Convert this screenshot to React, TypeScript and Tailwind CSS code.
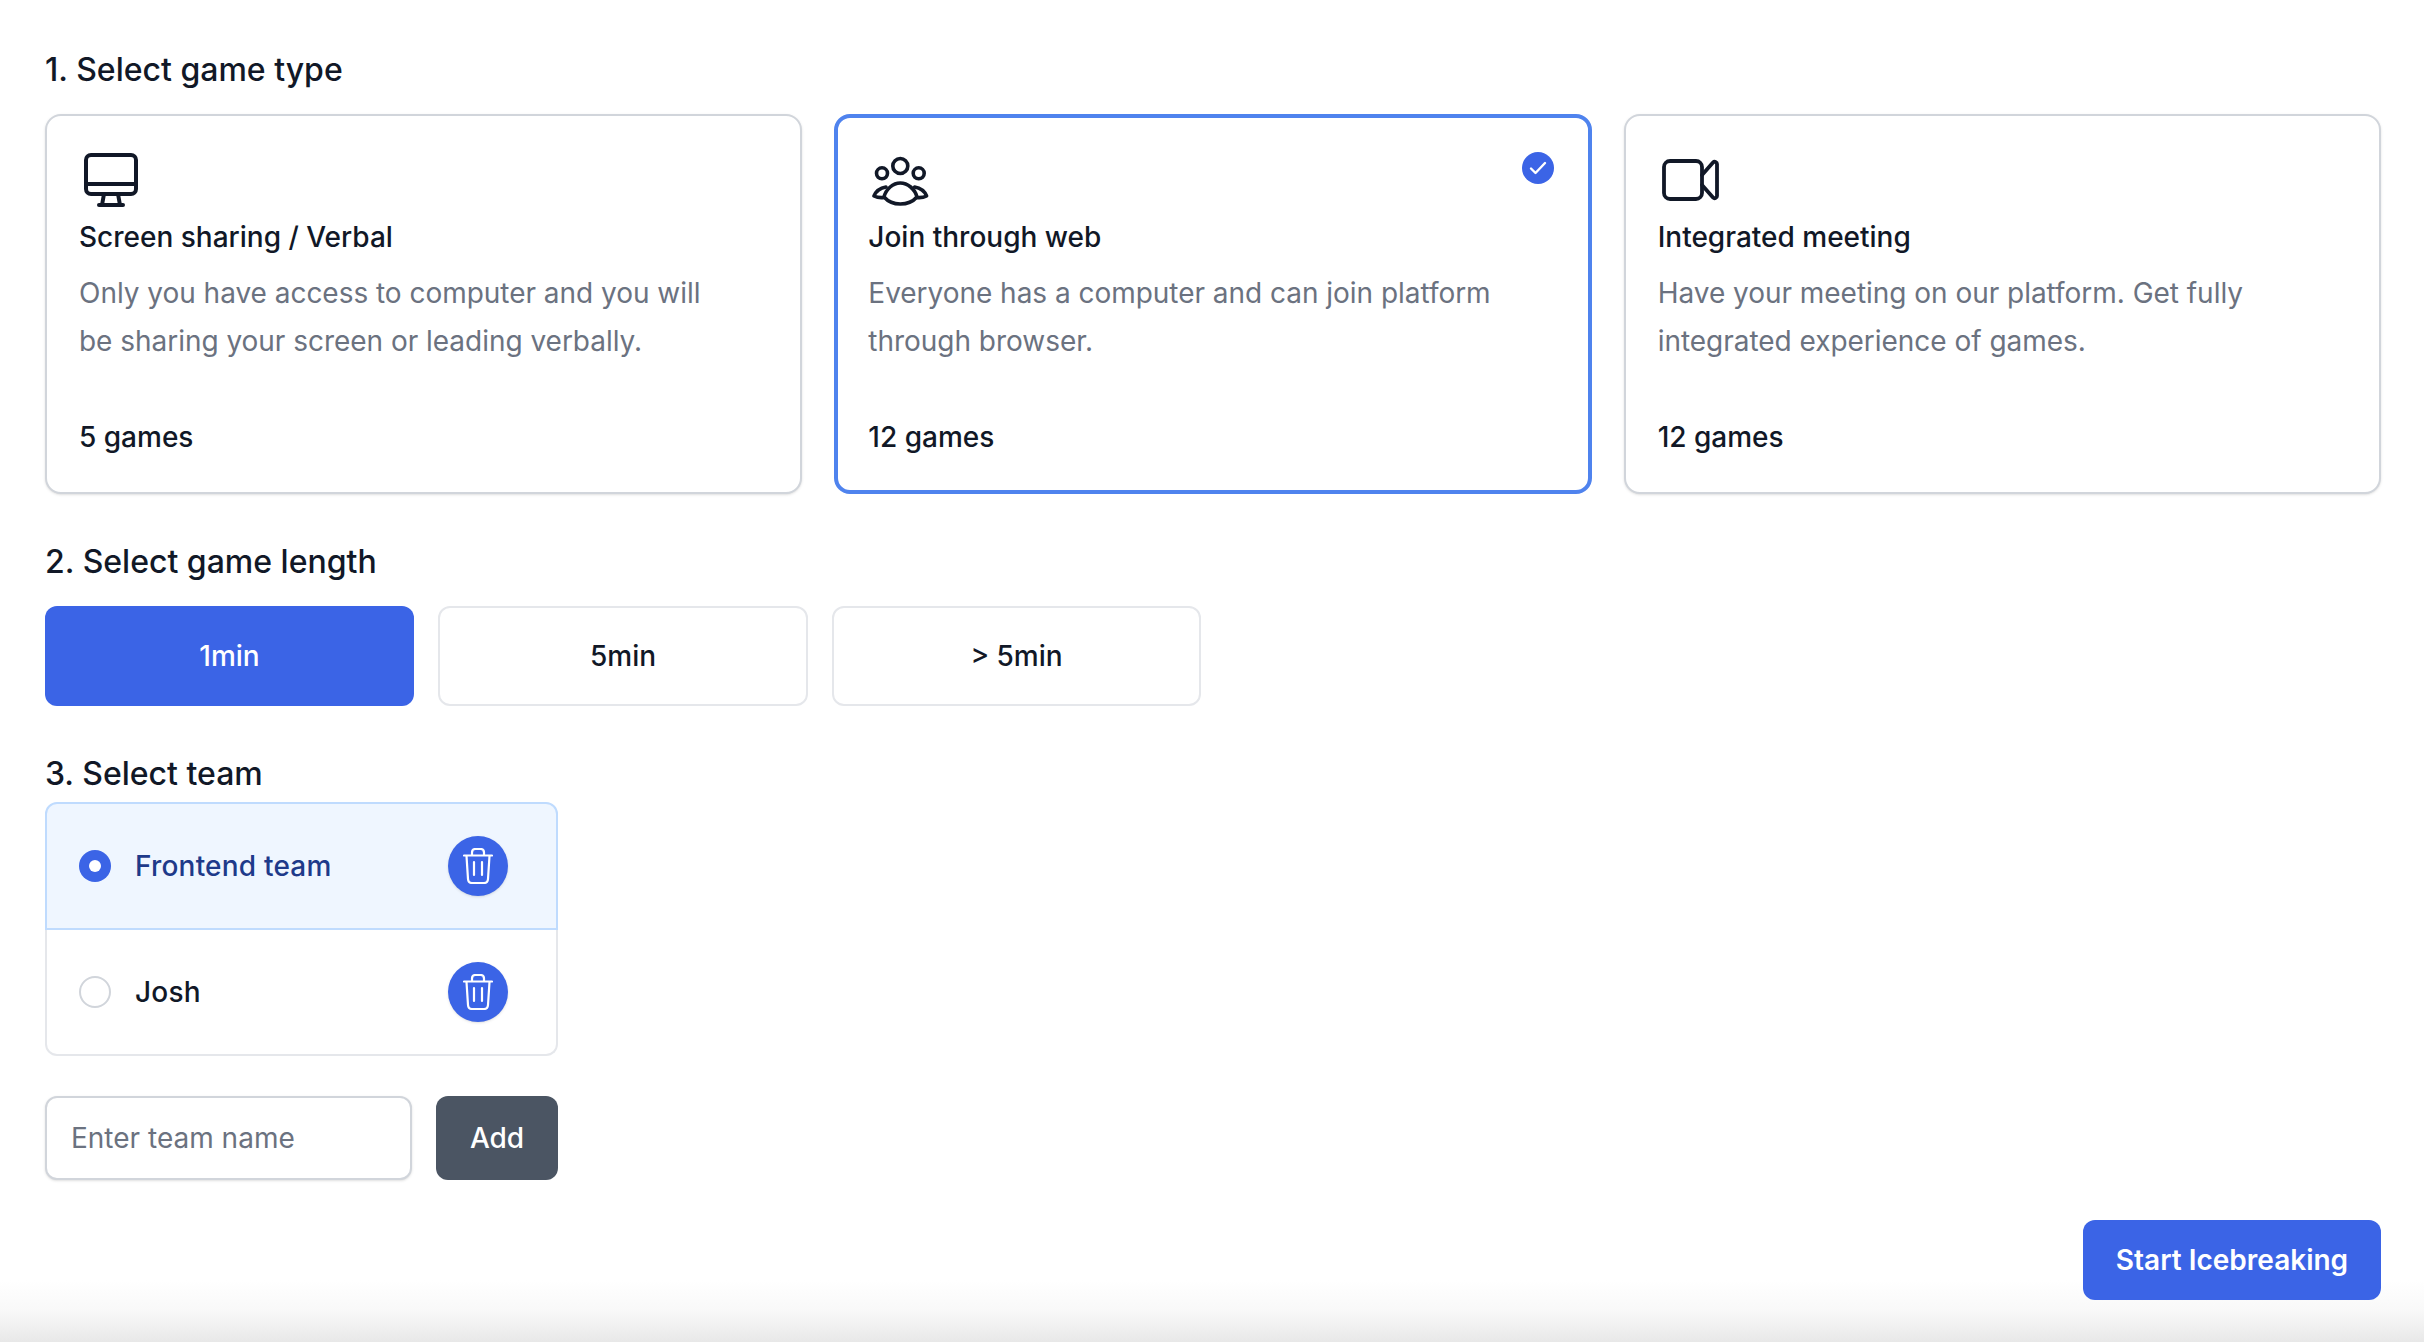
const cards = [
  {
    title: "Screen sharing / Verbal",
    lines: "Only you have access to computer and you will be sharing your screen or leading verbally.",
    games: "5 games",
    icon: <MonitorIcon />,
    selected: false,
  },
  {
    title: "Join through web",
    lines: "Everyone has a computer and can join platform through browser.",
    games: "12 games",
    icon: <GroupIcon />,
    selected: true,
  },
  {
    title: "Integrated meeting",
    lines: "Have your meeting on our platform. Get fully integrated experience of games.",
    games: "12 games",
    icon: <VideoIcon />,
    selected: false,
  },
];

function MonitorIcon() {
  return (
    <svg className="ml-[1px]" width="54" height="54" viewBox="0 0 54 54" fill="none" stroke="#111827" strokeWidth="4" strokeLinejoin="round" strokeLinecap="round">
      <rect x="2" y="2" width="50" height="39" rx="5" />
      <path d="M2 31h50" />
      <path d="M20 41l-2 11h18l-2-11" />
      <path d="M15 52h24" />
    </svg>
  );
}

function GroupIcon() {
  return (
    <svg className="mt-[3px]" width="58" height="52" viewBox="0 0 58 52" fill="none" stroke="#111827" strokeWidth="3.6" strokeLinejoin="round" strokeLinecap="round">
      <circle cx="28.300" cy="10" r="7.500" />
      <circle cx="10" cy="17.300" r="5.500" />
      <circle cx="46.700" cy="17.300" r="5.500" />
      <path d="M12 41c2-8 9-14 16.300-14s14.700 6 16.700 14c-4 4.500-10 7-16.700 7s-12.300-2.500-16.300-7z" />
      <path d="M14 31c-6 1-10 4-12 9 3 1.500 6 2 10 1.500" />
      <path d="M42.600 31c6 1 10 4 12 9-3 1.500-6 2-10 1.500" />
    </svg>
  );
}

function VideoIcon() {
  return (
    <svg width="58" height="42" viewBox="0 0 58 42" fill="none" stroke="#111827" strokeWidth="3.8" strokeLinejoin="round" strokeLinecap="round">
      <rect x="2" y="2" width="38" height="38" rx="6" />
      <path d="M40 16L51 3.500c1.500-1.500 4-.5 4 1.500v32c0 2-2.500 3-4 1.500L40 26" />
    </svg>
  );
}

function TrashIcon() {
  return (
    <svg width="30" height="36" viewBox="0 0 30 36" fill="none" stroke="#ffffff" strokeWidth="2.2" strokeLinejoin="round" strokeLinecap="round">
      <path d="M1 7.500h28" />
      <path d="M3.500 8l1.500 23c.2 2.500 1.500 4 4 4h12c2.500 0 3.800-1.500 4-4l1.500-23" />
      <path d="M9 7V4.500C9 2.500 10.500 1 12.500 1h5c2 0 3.500 1.500 3.500 3.500V7" />
      <path d="M11 14v13M19 14v13" />
    </svg>
  );
}

function TeamRow({ name, selected }: { name: string; selected: boolean }) {
  return (
    <div
      className={
        selected
          ? "h-[128px] flex items-center pl-[32px] pr-[48px] bg-[#eff6ff] border-2 border-[#bfdbfe] rounded-t-[12px]"
          : "h-[126px] flex items-center pl-[32px] pr-[48px] bg-white border-2 border-t-0 border-[#e5e7eb] rounded-b-[12px]"
      }
    >
      {selected ? (
        <span className="w-[32px] h-[32px] rounded-full bg-[#3b64e6] flex items-center justify-center">
          <span className="w-[12px] h-[12px] rounded-full bg-white" />
        </span>
      ) : (
        <span className="w-[32px] h-[32px] rounded-full bg-white border-2 border-[#d1d5db]" />
      )}
      <span className={selected ? "ml-[24px] text-[28px] tracking-[0.2px] font-medium text-[#1e3a8a]" : "ml-[24px] text-[28px] tracking-[0.2px] font-medium text-[#111827]"}>
        {name}
      </span>
      <button className="ml-auto w-[60px] h-[60px] rounded-full bg-[#3b64e6] shadow-sm flex items-center justify-center">
        <TrashIcon />
      </button>
    </div>
  );
}

export default function App() {
  return (
    <div className="h-[1342px] overflow-hidden bg-[linear-gradient(to_bottom,#ffffff_0,#ffffff_1280px,#f9f9f9_1310px,#e8e8e8_1342px)] px-[45px] pt-[50px] font-['Inter',sans-serif] text-[#111827]">
      <h2 className="text-[32px] leading-[40px] font-medium">1. Select game type</h2>

      <div className="mt-[24px] grid grid-cols-3 gap-[32px] w-[2336px]">
        {cards.map((card) => (
          <div
            key={card.title}
            className={
              card.selected
                ? "relative h-[380px] rounded-[16px] bg-white border-4 border-[#4f83ee] px-[30px] pt-[34px]"
                : "relative h-[380px] rounded-[16px] bg-white border-2 border-[#d1d5db] shadow-sm px-[32px] pt-[36px]"
            }
          >
            {card.selected && (
              <span className="absolute right-[34px] top-[34px] w-[32px] h-[32px] rounded-full bg-[#3b64e6] flex items-center justify-center">
                <svg width="18" height="14" viewBox="0 0 18 14" fill="none" stroke="#ffffff" strokeWidth="2.4" strokeLinecap="round" strokeLinejoin="round">
                  <path d="M2 7.500l4.500 4.500L16 2" />
                </svg>
              </span>
            )}
            <div className="h-[56px] pl-[4px] flex items-center">{card.icon}</div>
            <div className="mt-[9px] text-[28px] leading-[40px] font-medium">{card.title}</div>
            <p className="mt-[12px] w-[660px] text-[28px] leading-[48px] tracking-[-0.03px] text-[#6b7280]">{card.lines}</p>
            <div className="mt-[52px] text-[28px] leading-[40px] font-medium">{card.games}</div>
          </div>
        ))}
      </div>

      <h2 className="mt-[48px] text-[32px] leading-[40px] font-medium">2. Select game length</h2>

      <div className="mt-[24px] flex gap-[24px]">
        <button className="w-[369px] h-[100px] rounded-[12px] bg-[#3b64e6] text-white text-[28px] font-medium">1min</button>
        <button className="w-[370px] h-[100px] rounded-[12px] bg-white border-2 border-[#e5e7eb] text-[28px] font-medium">5min</button>
        <button className="w-[369px] h-[100px] rounded-[12px] bg-white border-2 border-[#e5e7eb] text-[28px] font-medium">&gt; 5min</button>
      </div>

      <h2 className="mt-[48px] text-[32px] leading-[40px] font-medium">3. Select team</h2>

      <div className="mt-[8px] w-[513px]">
        <TeamRow name="Frontend team" selected />
        <TeamRow name="Josh" selected={false} />
      </div>

      <div className="mt-[40px] w-[513px] flex gap-[24px]">
        <input
          placeholder="Enter team name"
          className="w-[367px] h-[84px] rounded-[12px] bg-white border-2 border-[#d1d5db] shadow-sm px-[24px] text-[28px] placeholder:text-[#6b7280] outline-none"
        />
        <button className="w-[122px] h-[84px] rounded-[12px] bg-[#4b5563] text-white text-[28px] font-medium">Add</button>
      </div>

      <div className="mt-[40px] w-[2336px] flex justify-end">
        <button className="w-[298px] h-[80px] rounded-[12px] bg-[#3b64e6] text-white text-[28px] font-semibold">Start Icebreaking</button>
      </div>
    </div>
  );
}
